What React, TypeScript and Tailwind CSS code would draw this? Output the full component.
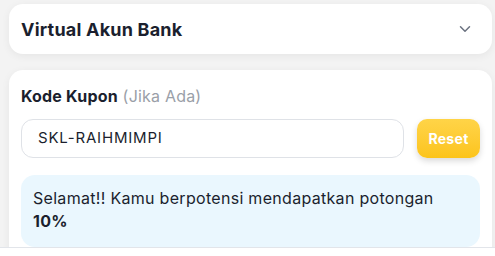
import { ChevronDown } from 'lucide-react'

export default function App() {
  return (
    <div className="relative h-[256px] overflow-hidden bg-[#f3f3f3] font-['Inter',sans-serif]">
      <div className="px-[9px] pr-[3px] pt-[4px] flex flex-col gap-4">
        {/* Accordion header */}
        <div className="flex h-[50px] items-center justify-between rounded-[14px] bg-white pl-3 pr-[18px] shadow-[0_2px_8px_rgba(0,0,0,0.06)]">
          <span className="text-[18px] font-bold tracking-[0.2px] text-[#1b1f2e]">Virtual Akun Bank</span>
          <ChevronDown className="h-[18px] w-[18px] text-[#6b7280]" strokeWidth={2} />
        </div>

        {/* Coupon card */}
        <div className="rounded-[14px] bg-white px-3 pt-4 pb-6 shadow-[0_2px_8px_rgba(0,0,0,0.06)]">
          <div className="text-[16px] leading-5 tracking-[0.2px] text-[#1b1f2e]">
            <span className="font-bold">Kode Kupon</span>{' '}
            <span className="text-[#9aa0a8]">(Jika Ada)</span>
          </div>

          <div className="mt-[13px] flex items-center gap-[13px]">
            <div className="flex h-[39px] flex-1 items-center rounded-[12px] border border-[#dfe2e7] px-4 text-[15px] tracking-[0.8px] text-[#1b1f2e]">
              SKL-RAIHMIMPI
            </div>
            <button className="h-[39px] w-[63px] rounded-[10px] bg-gradient-to-b from-[#ffd447] to-[#fcc419] text-[14px] font-bold tracking-[0.3px] text-white shadow-[0_3px_6px_rgba(0,0,0,0.15)]">
              Reset
            </button>
          </div>

          <div className="mt-[17px] rounded-[14px] bg-[#eaf7fe] px-3 pt-[12px] pb-[14px] text-[16px] leading-[23px] tracking-[0.3px] text-[#1b1f2e]">
            Selamat!! Kamu berpotensi mendapatkan potongan
            <div className="font-bold">10%</div>
          </div>
        </div>
      </div>

      {/* Bottom bar */}
      <div className="absolute bottom-0 left-0 right-0 h-[9px] border-t border-[#e2e5ea] bg-white" />
    </div>
  )
}
